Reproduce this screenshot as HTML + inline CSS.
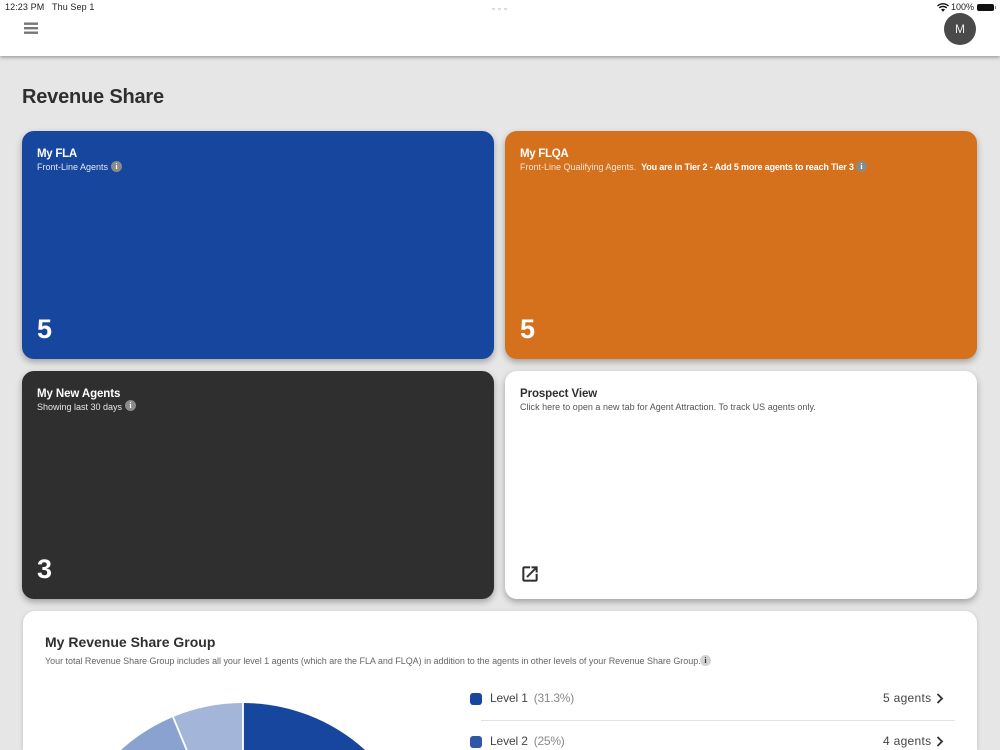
<!DOCTYPE html>
<html>
<head>
<meta charset="utf-8">
<style>
html,body{margin:0;padding:0;width:1000px;height:750px;overflow:hidden;background:#e6e6e6;font-family:"Liberation Sans",sans-serif;}
#clip{position:absolute;left:0;top:0;width:1000px;height:750px;overflow:hidden;}
.abs{position:absolute;white-space:nowrap;}
#top{position:absolute;left:0;top:0;width:1000px;height:56px;background:#fff;box-shadow:0 1px 4px rgba(0,0,0,.4);}
.card{position:absolute;width:472px;height:228px;border-radius:12px;box-shadow:0 3px 7px rgba(0,0,0,.3);}
.t{position:absolute;left:15px;top:16px;font-size:11.500px;font-weight:bold;line-height:14px;letter-spacing:-.1px;white-space:nowrap;}
.s{position:absolute;left:15px;top:31px;font-size:9px;line-height:11px;letter-spacing:0;white-space:nowrap;}
.n{position:absolute;left:15px;top:182px;font-size:27px;font-weight:bold;line-height:32px;color:#fff;}
.i{position:absolute;width:11px;height:11px;border-radius:50%;background:#8a8a8a;color:#fff;font:bold 8px/11px "Liberation Serif",serif;text-align:center;}
</style>
</head>
<body>
<div id="clip">
<div id="top"></div>
<div class="abs" style="left:5px;top:2px;font-size:9px;line-height:11px;color:#222;letter-spacing:.1px;">12:23 PM</div>
<div class="abs" style="left:52px;top:2px;font-size:9px;line-height:11px;color:#222;letter-spacing:.1px;">Thu Sep 1</div>
<div class="abs" style="left:492px;top:8px;width:15px;height:2px;background:repeating-linear-gradient(90deg,#ddd 0 3px,transparent 3px 6px);"></div>
<svg class="abs" style="left:937px;top:3px" width="12" height="9" viewBox="0 0 12 9"><path d="M.5 3A8 8 0 0 1 11.500 3M2.300 4.900A5.400 5.400 0 0 1 9.700 4.900" fill="none" stroke="#111" stroke-width="1.400"/><path d="M4 6.500a3 3 0 0 1 4 0L6 8.700z" fill="#111"/></svg>
<div class="abs" style="left:951px;top:2px;font-size:9px;line-height:11px;color:#222;">100%</div>
<div class="abs" style="left:977px;top:4px;width:17px;height:7px;background:#111;border-radius:2px;"></div>
<div class="abs" style="left:995px;top:6px;width:1px;height:3px;background:#888;"></div>
<svg class="abs" style="left:24px;top:22px" width="14" height="13" viewBox="0 0 14 13"><rect x="0" y=".5" width="14" height="2.400" fill="#777"/><rect x="0" y="5" width="14" height="2.400" fill="#777"/><rect x="0" y="9.500" width="14" height="2.400" fill="#777"/></svg>
<div class="abs" style="left:944px;top:13px;width:32px;height:32px;border-radius:50%;background:#4a4a4a;color:#eee;font-size:12px;line-height:32px;text-align:center;">M</div>

<div class="abs" style="left:22px;top:85px;font-size:20px;line-height:25px;font-weight:bold;color:#2f2f2f;letter-spacing:-.2px;">Revenue Share</div>

<div class="card" style="left:22px;top:131px;background:#17469e;color:#fff;">
  <div class="t" style="letter-spacing:-.27px;">My FLA</div>
  <div class="s" style="color:#e3e8f3;">Front-Line Agents</div>
  <div class="i" style="left:89px;top:30px;">i</div>
  <div class="n">5</div>
</div>
<div class="card" style="left:505px;top:131px;background:#d5711c;color:#fff;">
  <div class="t" style="letter-spacing:-.3px;">My FLQA</div>
  <div class="s" style="color:#f6e3d2;">Front-Line Qualifying Agents.&nbsp; <b style="color:#fff;letter-spacing:-.17px;">You are in Tier 2 - Add 5 more agents to reach Tier 3</b></div>
  <div class="i" style="left:351px;top:30px;">i</div>
  <div class="n">5</div>
</div>
<div class="card" style="left:22px;top:371px;background:#2f2f2f;color:#fff;">
  <div class="t">My New Agents</div>
  <div class="s" style="color:#e6e6e6;">Showing last 30 days</div>
  <div class="i" style="left:103px;top:29px;">i</div>
  <div class="n">3</div>
</div>
<div class="card" style="left:505px;top:371px;background:#fff;color:#2f2f2f;">
  <div class="t">Prospect View</div>
  <div class="s" style="color:#555;letter-spacing:.02px;">Click here to open a new tab for Agent Attraction. To track US agents only.</div>
  <svg style="position:absolute;left:15px;top:193px" width="20" height="20" viewBox="0 0 24 24"><path fill="#2f2f2f" stroke="#2f2f2f" stroke-width=".4" d="M19 19H5V5h7V3H5c-1.110 0-2 .9-2 2v14c0 1.100.89 2 2 2h14c1.100 0 2-.9 2-2v-7h-2v7zM14 3v2h3.590l-9.830 9.830 1.410 1.410L19 6.410V10h2V3h-7z"/></svg>
</div>

<div style="position:absolute;left:23px;top:611px;width:954px;height:139px;background:#fff;border-radius:12px 12px 0 0;box-shadow:0 1px 4px rgba(0,0,0,.18);"></div>
<div class="abs" style="left:45px;top:633px;font-size:14px;line-height:18px;font-weight:bold;color:#2f2f2f;letter-spacing:0;">My Revenue Share Group</div>
<div class="abs" style="left:45px;top:655px;font-size:9px;line-height:12px;color:#666;letter-spacing:-.03px;">Your total Revenue Share Group includes all your level 1 agents (which are the FLA and FLQA) in addition to the agents in other levels of your Revenue Share Group.</div>
<div class="i" style="left:700px;top:655px;background:#d2d2d2;color:#333;">i</div>

<svg class="abs" style="left:0;top:690px" width="470" height="60" viewBox="0 690 470 60">
  <path d="M243 750L243 703A182 182 0 0 1 365 750Z" fill="#17469e"/>
  <path d="M186.700 750L173 717A182 182 0 0 1 243 703L243 750Z" fill="#a3b5d9"/>
  <path d="M186.700 750L173 717A182 182 0 0 0 121 750Z" fill="#8aa2cf"/>
  <path d="M243 703L243 750M173 717L186.700 750" stroke="#fff" stroke-width="1.800" fill="none"/>
</svg>

<div class="abs" style="left:470px;top:693px;width:12px;height:12px;border-radius:3px;background:#17469e;"></div>
<div class="abs" style="left:490px;top:691px;font-size:12px;line-height:15px;color:#444;letter-spacing:-.13px;">Level 1<span style="color:#888;letter-spacing:-.27px;margin-left:6px;">(31.3%)</span></div>
<div class="abs" style="left:883px;top:691px;font-size:12px;line-height:15px;color:#444;letter-spacing:.3px;">5 agents</div>
<svg class="abs" style="left:936px;top:693px" width="8" height="11" viewBox="0 0 8 11"><path d="M1.500 1L6 5.500L1.500 10" fill="none" stroke="#333" stroke-width="1.800"/></svg>
<div class="abs" style="left:481px;top:720px;width:474px;height:1px;background:#e2e2e2;"></div>
<div class="abs" style="left:470px;top:736px;width:12px;height:12px;border-radius:3px;background:#2f57a8;"></div>
<div class="abs" style="left:490px;top:734px;font-size:12px;line-height:15px;color:#444;letter-spacing:-.13px;">Level 2<span style="color:#888;letter-spacing:-.27px;margin-left:6px;">(25%)</span></div>
<div class="abs" style="left:883px;top:734px;font-size:12px;line-height:15px;color:#444;letter-spacing:.3px;">4 agents</div>
<svg class="abs" style="left:936px;top:736px" width="8" height="11" viewBox="0 0 8 11"><path d="M1.500 1L6 5.500L1.500 10" fill="none" stroke="#333" stroke-width="1.800"/></svg>
</div>
</body>
</html>
